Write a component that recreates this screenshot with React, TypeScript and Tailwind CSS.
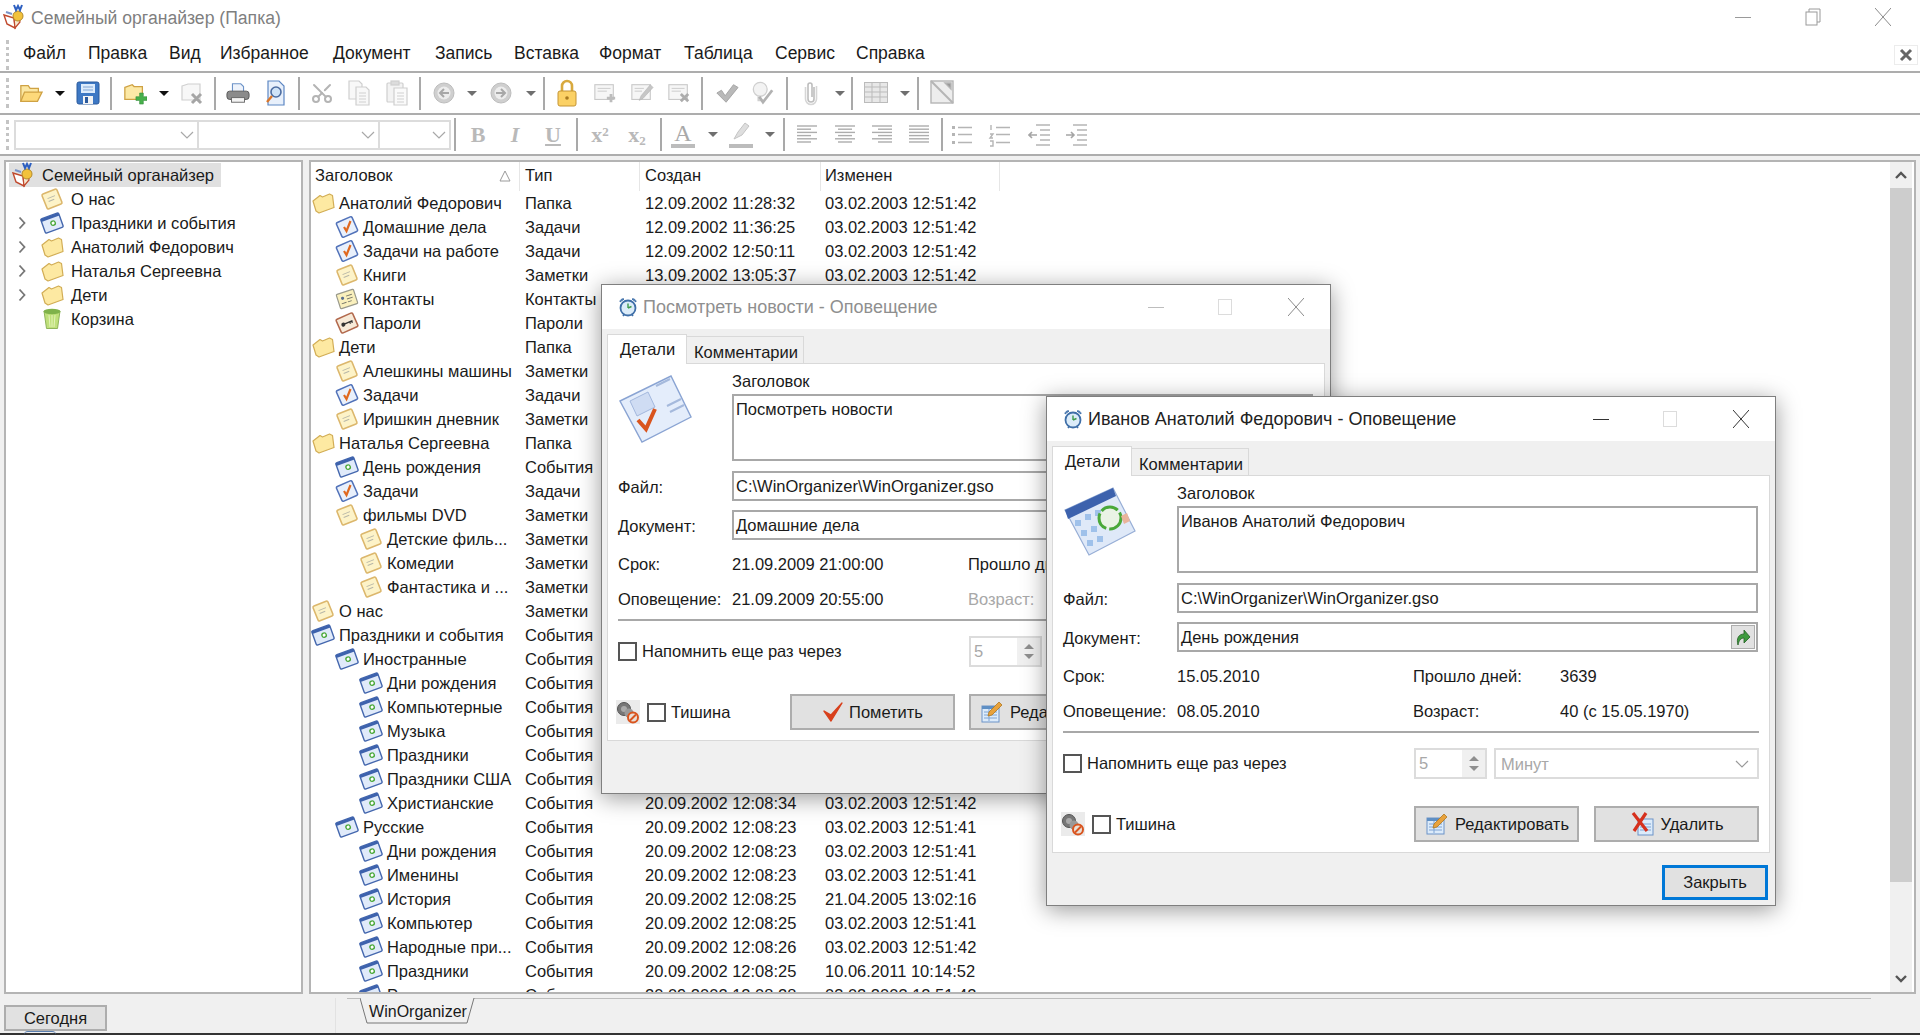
import type { ReactNode } from "react";
import { Scissors } from "lucide-react";

// tree + list icons ---------------------------------------------------------

function NoteIcon() {
  return (
    <svg width="24" height="24" viewBox="0 0 24 24" className="shrink-0">
      <g transform="rotate(-22 12 12)">
        <rect x="4" y="4" width="16" height="16" rx="1.5" fill="#fdf3c8" stroke="#dcb76c" strokeWidth="1.6" />
        <path d="M8 10h8M8 13h6" stroke="#b7b7a8" strokeWidth="1" />
      </g>
    </svg>
  );
}

function EventIcon() {
  return (
    <svg width="24" height="24" viewBox="0 0 24 24" className="shrink-0">
      <g transform="rotate(-20 12 12)">
        <rect x="2.5" y="4.5" width="19" height="15" rx="1.5" fill="#e0eafa" stroke="#4467ae" strokeWidth="1.4" />
        <rect x="2.5" y="4.5" width="19" height="3" fill="#3d62ad" />
        <circle cx="13" cy="12.5" r="2.2" fill="#fff" stroke="#4aa83a" strokeWidth="1.4" />
      </g>
    </svg>
  );
}

function TaskIcon() {
  return (
    <svg width="24" height="24" viewBox="0 0 24 24" className="shrink-0">
      <g transform="rotate(-24 12 12)">
        <rect x="3.5" y="4" width="17" height="16" rx="1.5" fill="#e9f0fb" stroke="#5172b9" strokeWidth="1.5" />
      </g>
      <path d="M9 12l2.5 4L15.5 6" fill="none" stroke="#e0691f" strokeWidth="2.2" />
    </svg>
  );
}

function FolderIcon() {
  return (
    <svg width="24" height="24" viewBox="0 0 24 24" className="shrink-0">
      <path d="M2 10l7-5.5 2.5 1.5 7-3 3 1.5 1.5 12-15 5.5-3-2z" fill="#fde9a2" stroke="#d2ad55" strokeWidth="1.2" strokeLinejoin="round" />
    </svg>
  );
}

function ContactsIcon() {
  return (
    <svg width="24" height="24" viewBox="0 0 24 24" className="shrink-0">
      <g transform="rotate(-18 12 12)">
        <rect x="3" y="4.5" width="18" height="15" rx="1" fill="#faf0bd" stroke="#9a9a8c" strokeWidth="1.2" />
        <circle cx="8" cy="10" r="1.6" fill="#5a6f8f" />
        <path d="M5.5 15h5M12 9h6M12 12h6M12 15h4" stroke="#77776a" strokeWidth="1" />
      </g>
    </svg>
  );
}

function PasswordIcon() {
  return (
    <svg width="24" height="24" viewBox="0 0 24 24" className="shrink-0">
      <g transform="rotate(-24 12 12)">
        <rect x="3" y="4.5" width="18" height="15" rx="1.5" fill="#f7ead8" stroke="#b2694d" strokeWidth="1.5" />
        <circle cx="8" cy="12" r="2" fill="#333" />
        <path d="M9 12h9M15 12v2M17 12v2" stroke="#333" strokeWidth="1.4" />
      </g>
    </svg>
  );
}

function TrashIcon() {
  return (
    <svg width="24" height="24" viewBox="0 0 24 24" className="shrink-0">
      <path d="M4 4h16l-2.5 17.5h-11z" fill="#bfe07a" stroke="#8fb45a" strokeWidth="1" />
      <ellipse cx="12" cy="4.5" rx="8.5" ry="2.8" fill="#7fb24a" />
      <path d="M9 8l1 12M12 8v12M15 8l-1 12" stroke="#e4f3b8" strokeWidth="1" />
    </svg>
  );
}

function AppIcon() {
  return (
    <svg width="26" height="26" viewBox="0 0 26 26" className="shrink-0">
      <path d="M1 11l10 3 1 10-8-4z" fill="#fff" stroke="#c0492d" strokeWidth="1.4" />
      <path d="M11 14l5-3 1 7-5 6z" fill="#f6e8d0" stroke="#c0492d" strokeWidth="1.2" />
      <circle cx="15" cy="12" r="5" fill="#f2c23c" stroke="#b48a2a" strokeWidth="1" />
      <path d="M11 1l2 5 2-4 2 4 2-5" fill="none" stroke="#2d5fc0" strokeWidth="2" />
      <path d="M3 8l6 2" stroke="#7a93c8" strokeWidth="2" />
    </svg>
  );
}

function AlarmIcon() {
  return (
    <svg width="22" height="22" viewBox="0 0 22 22" className="shrink-0">
      <circle cx="11" cy="12" r="7.5" fill="#dcecf9" stroke="#3f6fa8" strokeWidth="1.8" />
      <path d="M3 6a3 3 0 0 1 4-3zM19 6a3 3 0 0 0-4-3z" fill="#5f8fc4" stroke="#3f6fa8" />
      <path d="M11 12V7.5M11 12l3.5-1.5" stroke="#3d9a4b" strokeWidth="1.4" />
      <path d="M6 20l1.5-2M16 20l-1.5-2" stroke="#3f6fa8" strokeWidth="1.6" />
    </svg>
  );
}

function BigTaskIcon() {
  return (
    <svg width="74" height="70" viewBox="0 0 74 70">
      <path d="M2 27L53 2l20 41-49 25z" fill="#e4edfb" stroke="#8aa4d3" strokeWidth="1.4" />
      <path d="M12 27l18-9 7 15-18 9z" fill="#cfdcf3" stroke="#a3b8de" />
      <path d="M38 12l14-7M49 32l14-7M52 38l14-7" stroke="#a5b9dc" strokeWidth="2" />
      <path d="M20 46l8 9 9-20" fill="none" stroke="#d9541e" strokeWidth="4" />
    </svg>
  );
}

function BigCalendarIcon() {
  return (
    <svg width="74" height="72" viewBox="0 0 74 72">
      <path d="M2 24L50 2l22 43-46 24z" fill="#dfe9f8" stroke="#97aed6" strokeWidth="1.2" />
      <path d="M2 24L50 2l3 8L5 33z" fill="#3d62ad" />
      <g fill="#9fc1ea">
        <rect x="12" y="34" width="6" height="6" />
        <rect x="22" y="28" width="6" height="6" />
        <rect x="32" y="24" width="6" height="6" />
        <rect x="18" y="44" width="6" height="6" />
        <rect x="28" y="40" width="6" height="6" />
        <rect x="24" y="54" width="6" height="6" />
        <rect x="34" y="50" width="6" height="6" />
      </g>
      <circle cx="47" cy="32" r="11" fill="#eaf3e6" stroke="#4aa83a" strokeWidth="3" strokeDasharray="18 3" />
      <path d="M58 30l6-3 3 8-6 3z" fill="#e9b49b" />
    </svg>
  );
}

function SilentIcon() {
  return (
    <svg width="24" height="24" viewBox="0 0 24 24" className="shrink-0 bg-[#ebebeb]">
      <circle cx="8" cy="9" r="6.5" fill="#777" stroke="#555" />
      <circle cx="8" cy="9" r="3" fill="#aaa" />
      <circle cx="13" cy="13" r="4.5" fill="#999" />
      <circle cx="17" cy="17.5" r="5" fill="#e8e0d8" stroke="#d9541e" strokeWidth="2" />
      <path d="M14 20.5l6-6" stroke="#d9541e" strokeWidth="2" />
    </svg>
  );
}

function EditIcon() {
  return (
    <svg width="26" height="26" viewBox="0 0 26 26" className="shrink-0">
      <rect x="3" y="7" width="17" height="16" fill="#dcebfa" stroke="#6d93c8" />
      <rect x="3" y="7" width="17" height="3" fill="#5f8fc4" />
      <path d="M5 13h13M5 16h13M5 19h13M10 10v12" stroke="#7fa4d4" />
      <path d="M10 13l10-10 3 3-10 10-4 1z" fill="#e8a23c" stroke="#b07920" strokeWidth="0.8" />
    </svg>
  );
}

function DeleteIcon() {
  return (
    <svg width="26" height="26" viewBox="0 0 26 26" className="shrink-0">
      <rect x="8" y="8" width="15" height="16" fill="#dcebfa" stroke="#6d93c8" />
      <path d="M10 13h11M10 16h11M10 19h11" stroke="#7fa4d4" />
      <path d="M3 2l14 18M16 2L4 20" stroke="#d6301c" strokeWidth="3.2" />
    </svg>
  );
}

function RedCheck() {
  return (
    <svg width="22" height="24" viewBox="0 0 22 24" className="shrink-0">
      <path d="M2 11l7 10L20 3 9 15z" fill="#d8401c" stroke="#d8401c" strokeWidth="1.4" strokeLinejoin="round" />
    </svg>
  );
}

function GoIcon() {
  return (
    <svg width="16" height="20" viewBox="0 0 16 20">
      <path d="M3 18c-2-7 1-11 6-11V3l6 7-6 6v-5c-3 0-5 2-6 7z" fill="#3e9b3e" stroke="#245f24" strokeWidth="0.8" />
    </svg>
  );
}

// window chrome -------------------------------------------------------------

function WinMin({ color }: { color: string }) {
  return (
    <svg width="16" height="16" viewBox="0 0 16 16" stroke={color}>
      <path d="M0 8.5h16" />
    </svg>
  );
}

function WinMax({ color }: { color: string }) {
  return (
    <svg width="16" height="16" viewBox="0 0 16 16" fill="none" stroke={color}>
      <rect x="1.5" y="0.5" width="13" height="15" />
    </svg>
  );
}

function WinRestore({ color }: { color: string }) {
  return (
    <svg width="16" height="18" viewBox="0 0 16 18" fill="none" stroke={color}>
      <path d="M4 4V1h11v13h-3" />
      <rect x="1" y="4" width="11" height="13" />
    </svg>
  );
}

function WinClose({ color }: { color: string }) {
  return (
    <svg width="16" height="18" viewBox="0 0 16 18" fill="none" stroke={color}>
      <path d="M0 0l16 18M16 0L0 18" />
    </svg>
  );
}

function ChevronDown({ color = "#a8a8a8" }: { color?: string }) {
  return (
    <svg width="14" height="8" viewBox="0 0 14 8" fill="none" stroke={color} strokeWidth="1.2" className="shrink-0">
      <path d="M1 1l6 6 6-6" />
    </svg>
  );
}

// toolbar -------------------------------------------------------------------

function Tool({ ml, children }: { ml: string; children: ReactNode }) {
  return <div className={`${ml} flex h-6 w-6 shrink-0 items-center justify-center`}>{children}</div>;
}

function Arrow({ ml, dim }: { ml: string; dim?: boolean }) {
  return (
    <div className={`${ml} h-0 w-0 shrink-0 border-x-[5px] border-t-[5px] border-x-transparent ${dim ? "border-t-[#6f6f6f]" : "border-t-[#111]"} mr-[10px]`} />
  );
}

function Sep({ ml }: { ml: string }) {
  return <div className={`${ml} h-[33px] w-[2px] shrink-0 bg-[#a9a9a9]`} />;
}

function Gripper() {
  return <div className="h-[30px] w-[3px] shrink-0 border-l-[3px] border-dotted border-[#c4c4c4]" />;
}

function LinesIcon({ rows }: { rows: [number, number][] }) {
  return (
    <svg width="24" height="24" viewBox="0 0 24 24" stroke="#adadad" strokeWidth="1.4">
      {rows.map(([a, b], i) => (
        <path key={i} d={`M${a} ${3 + i * 3.2}H${b}`} />
      ))}
    </svg>
  );
}

function MainToolbar() {
  return (
    <div className="flex h-[42px] shrink-0 items-center border-b-2 border-[#adadad] pl-[6px]">
      <Gripper />
      <Tool ml="ml-[10px]">
        <svg width="26" height="24" viewBox="0 0 26 24">
          <path d="M2 21V4h8l2 3h9v4" fill="#fbe7a3" stroke="#cfa244" strokeWidth="1.4" />
          <path d="M2 21l4-10h19l-5 10z" fill="#fdd97a" stroke="#cfa244" strokeWidth="1.4" />
        </svg>
      </Tool>
      <Arrow ml="ml-[12px]" />
      <Tool ml="ml-px">
        <svg width="24" height="24" viewBox="0 0 24 24">
          <rect x="1" y="1" width="22" height="22" rx="2" fill="#3d78c4" stroke="#2b5a9c" />
          <rect x="5" y="3" width="14" height="9" fill="#dcebfb" />
          <path d="M7 6h10M7 9h10" stroke="#7fa4d4" />
          <rect x="7" y="15" width="10" height="8" fill="#f4f4f4" />
          <rect x="9" y="16" width="3" height="6" fill="#2b5a9c" />
        </svg>
      </Tool>
      <Sep ml="ml-[10px]" />
      <Tool ml="ml-[11px]">
        <svg width="26" height="24" viewBox="0 0 26 24">
          <path d="M2 6l8-3 2 2h9v14H2z" fill="#fce9a6" stroke="#cfa244" strokeWidth="1.4" />
          <path d="M14 16h4v-4h4v4h4v4h-4v4h-4v-4h-4z" fill="#47b04b" stroke="#2f8a36" strokeWidth="0.6" />
        </svg>
      </Tool>
      <Arrow ml="ml-[12px]" />
      <Tool ml="ml-px">
        <svg width="24" height="24" viewBox="0 0 24 24">
          <path d="M2 5l6-2h12v16H2z" fill="#f7f7f7" stroke="#d0d0d0" strokeWidth="1.2" />
          <path d="M12 13l9 9M21 13l-9 9" stroke="#a5a5a5" strokeWidth="3" />
        </svg>
      </Tool>
      <Sep ml="ml-[10px]" />
      <Tool ml="ml-[10px]">
        <svg width="26" height="24" viewBox="0 0 26 24">
          <path d="M7 10V2h9l3 3v5" fill="#eef3fb" stroke="#6d93c8" strokeWidth="1.2" />
          <rect x="1" y="10" width="24" height="9" rx="3" fill="#8b8b8b" stroke="#555" />
          <rect x="6" y="17" width="14" height="5" fill="#f4f4f4" stroke="#666" />
        </svg>
      </Tool>
      <Tool ml="ml-[14px]">
        <svg width="24" height="26" viewBox="0 0 24 26">
          <path d="M4 1h11l5 5v19H4z" fill="#e8f0fb" stroke="#5d87c4" strokeWidth="1.2" />
          <circle cx="12" cy="12" r="5" fill="#cfe3f7" stroke="#4c6ca0" strokeWidth="1.6" />
          <path d="M8 16l-5 6" stroke="#d9762a" strokeWidth="2.4" />
        </svg>
      </Tool>
      <Sep ml="ml-[10px]" />
      <Tool ml="ml-[10px]">
        <Scissors size={26} color="#b4b4b4" strokeWidth={2} className="-rotate-90" />
      </Tool>
      <Tool ml="ml-[13px]">
        <svg width="24" height="26" viewBox="0 0 24 26" fill="#f8f8f8" stroke="#cfcfcf" strokeWidth="1.2">
          <path d="M2 1h10l3 3v15H2z" />
          <path d="M9 7h10l3 3v15H9z" />
          <path d="M12 13h7M12 16h7M12 19h7M12 22h7" />
        </svg>
      </Tool>
      <Tool ml="ml-[14px]">
        <svg width="24" height="26" viewBox="0 0 24 26" fill="#f3f3f3" stroke="#cfcfcf" strokeWidth="1.2">
          <rect x="2" y="3" width="16" height="19" rx="1" />
          <rect x="6" y="1" width="8" height="4" fill="#dcdcdc" />
          <path d="M9 8h13v17H9z" fill="#fafafa" />
          <path d="M12 13h7M12 16h7M12 19h7M12 22h7" />
        </svg>
      </Tool>
      <Sep ml="ml-[10px]" />
      <Tool ml="ml-[11px]">
        <svg width="24" height="24" viewBox="0 0 24 24">
          <circle cx="12" cy="12" r="10" fill="#cfcfcf" stroke="#bdbdbd" />
          <circle cx="12" cy="12" r="6.5" fill="#ededed" />
          <path d="M17 12H9M12 8l-4 4 4 4" fill="none" stroke="#a8a8a8" strokeWidth="2" />
        </svg>
      </Tool>
      <Arrow ml="ml-[11px]" dim />
      <Tool ml="ml-[2px]">
        <svg width="24" height="24" viewBox="0 0 24 24">
          <circle cx="12" cy="12" r="10" fill="#cfcfcf" stroke="#bdbdbd" />
          <circle cx="12" cy="12" r="6.5" fill="#ededed" />
          <path d="M7 12h8M12 8l4 4-4 4" fill="none" stroke="#a8a8a8" strokeWidth="2" />
        </svg>
      </Tool>
      <Arrow ml="ml-[13px]" dim />
      <Sep ml="-ml-[3px]" />
      <Tool ml="ml-[10px]">
        <svg width="20" height="28" viewBox="0 0 20 28">
          <path d="M5 13V7a5 5 0 0 1 10 0v6" fill="none" stroke="#d8a93e" strokeWidth="2.6" />
          <rect x="1" y="12" width="18" height="15" rx="2" fill="#fbd165" stroke="#c59535" />
          <circle cx="10" cy="19" r="1.8" fill="#a87a20" />
        </svg>
      </Tool>
      <Tool ml="ml-[14px]">
        <svg width="26" height="24" viewBox="0 0 26 24">
          <rect x="2" y="3" width="20" height="16" fill="#f6f6f6" stroke="#c9c9c9" strokeWidth="1.2" />
          <path d="M5 7h14M5 10h10" stroke="#c9c9c9" />
          <path d="M15 16h3v-3h3v3h3v3h-3v3h-3v-3h-3z" fill="#bcbcbc" />
        </svg>
      </Tool>
      <Tool ml="ml-[13px]">
        <svg width="26" height="24" viewBox="0 0 26 24">
          <rect x="2" y="3" width="20" height="16" fill="#f6f6f6" stroke="#c9c9c9" strokeWidth="1.2" />
          <path d="M5 7h10M5 10h8" stroke="#c9c9c9" />
          <path d="M10 20l2-5L22 3l3 3-11 12z" fill="#c6c6c6" stroke="#b0b0b0" strokeWidth="0.6" />
        </svg>
      </Tool>
      <Tool ml="ml-[13px]">
        <svg width="26" height="24" viewBox="0 0 26 24">
          <rect x="2" y="3" width="20" height="16" fill="#f6f6f6" stroke="#c9c9c9" strokeWidth="1.2" />
          <path d="M5 7h14M5 10h10" stroke="#c9c9c9" />
          <path d="M15 13l8 8M23 13l-8 8" stroke="#adadad" strokeWidth="3" />
        </svg>
      </Tool>
      <Sep ml="ml-[10px]" />
      <Tool ml="ml-[12px]">
        <svg width="26" height="22" viewBox="0 0 26 22">
          <path d="M2 11l5-3 4 6L20 2l5 3-13 16z" fill="#b9b9b9" stroke="#a3a3a3" />
        </svg>
      </Tool>
      <Tool ml="ml-[12px]">
        <svg width="26" height="26" viewBox="0 0 26 26">
          <circle cx="10" cy="9" r="7.5" fill="#f3f3f3" stroke="#cfcfcf" strokeWidth="1.4" />
          <path d="M8 17v4h5" stroke="#cfcfcf" strokeWidth="2" fill="none" />
          <path d="M9 17l4 6 10-13" fill="none" stroke="#b2b2b2" strokeWidth="3" />
        </svg>
      </Tool>
      <Sep ml="ml-[11px]" />
      <Tool ml="ml-[11px]">
        <svg width="14" height="26" viewBox="0 0 14 26" fill="none" stroke="#bdbdbd" strokeWidth="1.6">
          <path d="M10 7v12a3 3 0 0 1-6 0V5a2 2 0 0 1 4 0v12" />
          <path d="M12.5 6v13a5.5 5.5 0 0 1-11 0V7" stroke="#d6d6d6" />
        </svg>
      </Tool>
      <Arrow ml="ml-[12px]" dim />
      <Sep ml="-ml-[4px]" />
      <Tool ml="ml-[11px]">
        <svg width="24" height="22" viewBox="0 0 24 22" fill="#e8e8e8" stroke="#bbb">
          <rect x="0.5" y="0.5" width="23" height="20" />
          <path d="M0 5h24M0 10h24M0 15h24M8 0v21M16 0v21" />
        </svg>
      </Tool>
      <Arrow ml="ml-[12px]" dim />
      <Sep ml="-ml-[3px]" />
      <Tool ml="ml-[11px]">
        <svg width="24" height="26" viewBox="0 0 24 26" fill="none" stroke="#b5b5b5" strokeWidth="1.4">
          <rect x="1" y="1" width="22" height="22" fill="#ededed" />
          <path d="M1 1l22 22" strokeWidth="2" />
          <path d="M15 3h6v6z" fill="#999" />
        </svg>
      </Tool>
    </div>
  );
}

function FormatToolbar() {
  const letter = "font-['Liberation_Serif',serif] text-[22px] font-bold text-[#b9b9b9]";
  return (
    <div className="flex h-[41px] shrink-0 items-center border-b-2 border-[#adadad] pl-[6px]">
      <Gripper />
      <div className="ml-[5px] flex h-[30px] w-[185px] shrink-0 items-center justify-end border-2 border-[#dcdcdc] pr-[3px]">
        <ChevronDown />
      </div>
      <div className="flex h-[30px] w-[181px] shrink-0 items-center justify-end border-y-2 border-r-2 border-[#dcdcdc] pr-[3px]">
        <ChevronDown />
      </div>
      <div className="flex h-[30px] w-[71px] shrink-0 items-center justify-end border-y-2 border-r-2 border-[#dcdcdc] pr-[3px]">
        <ChevronDown />
      </div>
      <Sep ml="ml-[3px]" />
      <Tool ml="ml-[10px]"><span className={letter}>B</span></Tool>
      <Tool ml="ml-[13px]"><span className={`${letter} italic`}>I</span></Tool>
      <Tool ml="ml-[14px]"><span className={`${letter} underline`}>U</span></Tool>
      <Sep ml="ml-[11px]" />
      <Tool ml="ml-[10px]"><span className={letter}>x<sup className="text-[13px]">2</sup></span></Tool>
      <Tool ml="ml-[13px]"><span className={`${letter} text-[18px]`}>x<sub className="text-[13px]">2</sub></span></Tool>
      <Sep ml="ml-[11px]" />
      <Tool ml="ml-[9px]">
        <div className="flex flex-col items-center">
          <span className="font-['Liberation_Serif',serif] text-[24px] leading-[22px] text-[#a9a9a9]">A</span>
          <div className="h-1 w-6 bg-[#bcbcbc]" />
        </div>
      </Tool>
      <Arrow ml="ml-[13px]" dim />
      <Tool ml="ml-px">
        <svg width="24" height="28" viewBox="0 0 24 28">
          <path d="M5 18l4-7 7-9 4 3-7 9z" fill="#dedede" stroke="#c4c4c4" />
          <rect x="0" y="23" width="24" height="4" fill="#bcbcbc" />
        </svg>
      </Tool>
      <Arrow ml="ml-[12px]" dim />
      <Sep ml="-ml-[2px]" />
      <Tool ml="ml-[10px]"><LinesIcon rows={[[2, 22], [2, 16], [2, 22], [2, 16], [2, 22], [2, 16]]} /></Tool>
      <Tool ml="ml-[14px]"><LinesIcon rows={[[2, 22], [5, 19], [2, 22], [5, 19], [2, 22], [5, 19]]} /></Tool>
      <Tool ml="ml-[13px]"><LinesIcon rows={[[2, 22], [8, 22], [2, 22], [8, 22], [2, 22], [8, 22]]} /></Tool>
      <Tool ml="ml-[13px]"><LinesIcon rows={[[2, 22], [2, 22], [2, 22], [2, 22], [2, 22], [2, 22]]} /></Tool>
      <Sep ml="ml-[10px]" />
      <Tool ml="ml-[7px]">
        <svg width="24" height="24" viewBox="0 0 24 24" stroke="#b5b5b5" strokeWidth="1.4" fill="#b5b5b5">
          <rect x="2" y="3" width="3" height="3" stroke="none" />
          <rect x="2" y="10" width="3" height="3" stroke="none" />
          <rect x="2" y="18" width="3" height="3" stroke="none" />
          <path d="M8 4.5h14M8 11.5h14M8 19.5h14" />
        </svg>
      </Tool>
      <Tool ml="ml-[14px]">
        <svg width="24" height="24" viewBox="0 0 24 24" stroke="#b5b5b5" strokeWidth="1.4">
          <path d="M3 2v5M2 11h3l-3 4h3M2 18h3v5H2M8 4.5h14M8 11.5h14M8 19.5h14" fill="none" />
        </svg>
      </Tool>
      <Tool ml="ml-[16px]">
        <svg width="24" height="24" viewBox="0 0 24 24" stroke="#b5b5b5" strokeWidth="1.6" fill="none">
          <path d="M8 2h14M12 7h10M12 12h10M12 17h10M8 22h14" />
          <path d="M1 12h8M4 9l-3 3 3 3" stroke="#a5a5a5" />
        </svg>
      </Tool>
      <Tool ml="ml-[13px]">
        <svg width="24" height="24" viewBox="0 0 24 24" stroke="#b5b5b5" strokeWidth="1.6" fill="none">
          <path d="M8 2h14M12 7h10M12 12h10M12 17h10M8 22h14" />
          <path d="M1 12h8M6 9l3 3-3 3" stroke="#a5a5a5" />
        </svg>
      </Tool>
    </div>
  );
}

// left tree -----------------------------------------------------------------

const treeNodes: { label: string; icon: ReactNode; arrow?: boolean }[] = [
  { label: "О нас", icon: <NoteIcon /> },
  { label: "Праздники и события", icon: <EventIcon />, arrow: true },
  { label: "Анатолий Федорович", icon: <FolderIcon />, arrow: true },
  { label: "Наталья Сергеевна", icon: <FolderIcon />, arrow: true },
  { label: "Дети", icon: <FolderIcon />, arrow: true },
  { label: "Корзина", icon: <TrashIcon /> },
];

function TreePanel() {
  return (
    <div className="ml-[4px] w-[299px] shrink-0 border-2 border-[#b4b4b4] bg-white pt-[1px] pl-[3px] text-[16.5px] text-[#1a1a1a]">
      <div className="flex h-6 w-[212px] items-center gap-[4px] bg-[#e0e0e0] pl-[3px]">
        <AppIcon />
        <span>Семейный органайзер</span>
      </div>
      {treeNodes.map((node) => (
        <div key={node.label} className="flex h-6 items-center">
          <div className="flex w-[31px] justify-center pr-[5px]">
            {node.arrow && (
              <svg width="9" height="14" viewBox="0 0 9 14" fill="none" stroke="#777" strokeWidth="1.8">
                <path d="M1.5 1.5l5 5.5-5 5.5" />
              </svg>
            )}
          </div>
          {node.icon}
          <span className="ml-[7px]">{node.label}</span>
        </div>
      ))}
    </div>
  );
}

// list ----------------------------------------------------------------------

type Kind = "note" | "event" | "task" | "folder" | "contacts" | "password";

type Row = {
  level: 0 | 1 | 2;
  kind: Kind;
  title: string;
  type: string;
  created?: string;
  changed?: string;
};

const icons: Record<Kind, ReactNode> = {
  note: <NoteIcon />,
  event: <EventIcon />,
  task: <TaskIcon />,
  folder: <FolderIcon />,
  contacts: <ContactsIcon />,
  password: <PasswordIcon />,
};

const indent = ["pl-0", "pl-[24px]", "pl-[48px]"];

const rows: Row[] = [
  { level: 0, kind: "folder", title: "Анатолий Федорович", type: "Папка", created: "12.09.2002 11:28:32", changed: "03.02.2003 12:51:42" },
  { level: 1, kind: "task", title: "Домашние дела", type: "Задачи", created: "12.09.2002 11:36:25", changed: "03.02.2003 12:51:42" },
  { level: 1, kind: "task", title: "Задачи на работе", type: "Задачи", created: "12.09.2002 12:50:11", changed: "03.02.2003 12:51:42" },
  { level: 1, kind: "note", title: "Книги", type: "Заметки", created: "13.09.2002 13:05:37", changed: "03.02.2003 12:51:42" },
  { level: 1, kind: "contacts", title: "Контакты", type: "Контакты" },
  { level: 1, kind: "password", title: "Пароли", type: "Пароли" },
  { level: 0, kind: "folder", title: "Дети", type: "Папка" },
  { level: 1, kind: "note", title: "Алешкины машины", type: "Заметки" },
  { level: 1, kind: "task", title: "Задачи", type: "Задачи" },
  { level: 1, kind: "note", title: "Иришкин дневник", type: "Заметки" },
  { level: 0, kind: "folder", title: "Наталья Сергеевна", type: "Папка" },
  { level: 1, kind: "event", title: "День рождения", type: "События" },
  { level: 1, kind: "task", title: "Задачи", type: "Задачи" },
  { level: 1, kind: "note", title: "фильмы DVD", type: "Заметки" },
  { level: 2, kind: "note", title: "Детские филь...", type: "Заметки" },
  { level: 2, kind: "note", title: "Комедии", type: "Заметки" },
  { level: 2, kind: "note", title: "Фантастика и ...", type: "Заметки" },
  { level: 0, kind: "note", title: "О нас", type: "Заметки" },
  { level: 0, kind: "event", title: "Праздники и события", type: "События" },
  { level: 1, kind: "event", title: "Иностранные", type: "События" },
  { level: 2, kind: "event", title: "Дни рождения", type: "События" },
  { level: 2, kind: "event", title: "Компьютерные", type: "События" },
  { level: 2, kind: "event", title: "Музыка", type: "События" },
  { level: 2, kind: "event", title: "Праздники", type: "События" },
  { level: 2, kind: "event", title: "Праздники США", type: "События" },
  { level: 2, kind: "event", title: "Христианские", type: "События", created: "20.09.2002 12:08:34", changed: "03.02.2003 12:51:42" },
  { level: 1, kind: "event", title: "Русские", type: "События", created: "20.09.2002 12:08:23", changed: "03.02.2003 12:51:41" },
  { level: 2, kind: "event", title: "Дни рождения", type: "События", created: "20.09.2002 12:08:23", changed: "03.02.2003 12:51:41" },
  { level: 2, kind: "event", title: "Именины", type: "События", created: "20.09.2002 12:08:23", changed: "03.02.2003 12:51:41" },
  { level: 2, kind: "event", title: "История", type: "События", created: "20.09.2002 12:08:25", changed: "21.04.2005 13:02:16" },
  { level: 2, kind: "event", title: "Компьютер", type: "События", created: "20.09.2002 12:08:25", changed: "03.02.2003 12:51:41" },
  { level: 2, kind: "event", title: "Народные при...", type: "События", created: "20.09.2002 12:08:26", changed: "03.02.2003 12:51:42" },
  { level: 2, kind: "event", title: "Праздники", type: "События", created: "20.09.2002 12:08:25", changed: "10.06.2011 10:14:52" },
  { level: 2, kind: "event", title: "Религиозные", type: "События", created: "20.09.2002 12:08:28", changed: "03.02.2003 12:51:42" },
];

const listCols = "grid grid-cols-[209px_120px_181px_179px]";

function ListPanel() {
  return (
    <div className="ml-[6px] flex min-w-0 flex-1 border-2 border-[#b4b4b4] bg-white pr-[2px]">
      <div className="min-w-0 flex-1 overflow-hidden text-[16.5px] text-[#1a1a1a]">
        <div className={`${listCols} h-[29px] items-center`}>
          <div className="flex h-full items-center justify-between border-r border-[#e6e6e6] pr-[8px] pb-[2px] pl-[4px]">
            Заголовок
            <svg width="12" height="12" viewBox="0 0 12 12" fill="none" stroke="#9a9a9a">
              <path d="M6 1l5 10H1z" />
            </svg>
          </div>
          <div className="flex h-full items-center border-r border-[#e6e6e6] pb-[2px] pl-[5px]">Тип</div>
          <div className="flex h-full items-center border-r border-[#e6e6e6] pb-[2px] pl-[5px]">Создан</div>
          <div className="flex h-full items-center border-r border-[#e6e6e6] pb-[2px] pl-[4px]">Изменен</div>
        </div>
        {rows.map((r, i) => (
          <div key={i} className={`${listCols} h-6 items-center`}>
            <div className={`flex items-center whitespace-nowrap ${indent[r.level]}`}>
              {icons[r.kind]}
              <span className="ml-[4px]">{r.title}</span>
            </div>
            <div className="pl-[5px]">{r.type}</div>
            <div className="pl-[5px]">{r.created}</div>
            <div className="pl-[4px]">{r.changed}</div>
          </div>
        ))}
      </div>
      <div className="flex w-[22px] shrink-0 flex-col bg-[#f0f0f0]">
        <div className="flex h-[26px] shrink-0 items-center justify-center">
          <svg width="12" height="8" viewBox="0 0 12 8" fill="none" stroke="#555" strokeWidth="2.4">
            <path d="M1 7l5-5 5 5" />
          </svg>
        </div>
        <div className="h-[694px] shrink-0 bg-[#cdcdcd]" />
        <div className="flex flex-1 items-end justify-center pb-[9px]">
          <svg width="12" height="8" viewBox="0 0 12 8" fill="none" stroke="#555" strokeWidth="2.4">
            <path d="M1 1l5 5 5-5" />
          </svg>
        </div>
      </div>
    </div>
  );
}

// alarm dialog --------------------------------------------------------------

function Check() {
  return <div className="h-[19px] w-[19px] shrink-0 border-2 border-[#555] bg-white" />;
}

function Input({ children, right }: { children: ReactNode; right?: ReactNode }) {
  return (
    <div className="flex h-[30px] w-[581px] shrink-0 items-center border-2 border-[#a8a8a8] bg-white pr-[1px] pl-[2px]">
      <span className="flex-1 pt-[1px]">{children}</span>
      {right}
    </div>
  );
}

function Btn({ icon, label, className = "" }: { icon: ReactNode; label: string; className?: string }) {
  return (
    <div className={`flex h-9 w-[165px] shrink-0 items-center justify-center gap-[5px] border-2 border-[#adadad] bg-[#e1e1e1] ${className}`}>
      {icon}
      {label}
    </div>
  );
}

type AlarmProps = {
  position: string;
  active: boolean;
  title: string;
  icon: ReactNode;
  file: string;
  doc: string;
  due: string;
  notify: string;
  days: string;
  ageLabelDim: boolean;
  age: string;
  mark: boolean;
};

function AlarmDialog(p: AlarmProps) {
  const ctl = p.active ? "#333" : "#bdbdbd";
  return (
    <div className={`${p.position} absolute flex h-[510px] w-[730px] flex-col border border-[#7f7f7f] bg-[#f0f0f0] text-[16.5px] text-[#1a1a1a] shadow-[0_4px_22px_rgba(0,0,0,0.4)]`}>
      <div className="flex h-[44px] shrink-0 items-center bg-white pl-[15px]">
        <AlarmIcon />
        <span className={`ml-[4px] pt-[1px] text-[18px] ${p.active ? "text-[#222]" : "text-[#8f8f8f]"}`}>{p.title}</span>
        <div className="ml-auto flex items-center pr-[26px]">
          <WinMin color={ctl} />
          <div className="ml-[53px]"><WinMax color="#dcdcdc" /></div>
          <div className="ml-[55px]"><WinClose color={p.active ? "#333" : "#8a8a8a"} /></div>
        </div>
      </div>

      <div className="flex h-[34px] shrink-0 items-end pl-[5px]">
        <div className="relative top-px z-10 flex h-[30px] w-[80px] items-center border-x border-t border-[#d9d9d9] bg-white pl-[12px]">Детали</div>
        <div className="flex h-[27px] w-[117px] items-center border-t border-r border-[#d9d9d9] pt-[5px] pl-[7px]">Комментарии</div>
      </div>

      <div className="mx-[5px] flex h-[378px] shrink-0 flex-col border border-[#d9d9d9] bg-white px-[10px] pt-[2px]">
        <div className="flex">
          <div className="w-[114px] shrink-0 pt-[8px]">{p.icon}</div>
          <div className="flex flex-col">
            <div className="flex h-[28px] items-center pt-[2px]">Заголовок</div>
            <div className="h-[67px] w-[581px] border-2 border-[#a8a8a8] pt-[1px] pl-[2px]">{p.title.split(" - ")[0]}</div>
          </div>
        </div>
        <div className="mt-[10px] flex items-center">
          <div className="w-[114px] shrink-0 pt-[3px]">Файл:</div>
          <Input>{p.file}</Input>
        </div>
        <div className="mt-[9px] flex items-center">
          <div className="w-[114px] shrink-0 pt-[3px]">Документ:</div>
          <Input
            right={
              <div className="flex h-[24px] w-[24px] items-center justify-center border border-[#adadad] bg-[#e1e1e1]">
                <GoIcon />
              </div>
            }
          >
            {p.doc}
          </Input>
        </div>
        <div className="mt-[11px] grid h-6 grid-cols-[114px_236px_147px_1fr] items-center pt-[1px]">
          <div>Срок:</div>
          <div>{p.due}</div>
          <div>Прошло дней:</div>
          <div>{p.days}</div>
        </div>
        <div className="mt-[12px] grid h-6 grid-cols-[114px_236px_147px_1fr] items-center pb-[1px]">
          <div>Оповещение:</div>
          <div>{p.notify}</div>
          <div className={p.ageLabelDim ? "text-[#a8a8a8]" : ""}>Возраст:</div>
          <div>{p.age}</div>
        </div>
        <div className="mt-[8px] h-[2px] shrink-0 bg-[#a8a8a8]" />
        <div className="mt-[15px] flex h-[31px] items-center">
          <div className="flex w-[351px] shrink-0 items-center gap-[5px]">
            <Check />
            Напомнить еще раз через
          </div>
          <div className="flex h-[31px] w-[73px] shrink-0 items-center border-2 border-[#dcdcdc] pl-[3px] text-[#a8a8a8]">
            <span className="flex-1">5</span>
            <div className="flex h-full w-[23px] flex-col items-center justify-center gap-[5px] bg-[#f0f0f0]">
              <div className="h-0 w-0 border-x-[5px] border-b-[5px] border-x-transparent border-b-[#8f8f8f]" />
              <div className="h-0 w-0 border-x-[5px] border-t-[5px] border-x-transparent border-t-[#8f8f8f]" />
            </div>
          </div>
          <div className="ml-[7px] flex h-[31px] w-[265px] shrink-0 items-center justify-between border-2 border-[#dcdcdc] pt-[1px] pr-[8px] pl-[5px] text-[#a8a8a8]">
            Минут
            <ChevronDown color="#9a9a9a" />
          </div>
        </div>
        <div className="mt-[27px] flex h-9 items-center">
          <div className="-ml-[2px] flex w-[174px] shrink-0 items-center">
            <SilentIcon />
            <div className="ml-[7px]"><Check /></div>
            <span className="ml-[5px] pt-[1px]">Тишина</span>
          </div>
          {p.mark ? (
            <Btn icon={<RedCheck />} label="Пометить" />
          ) : (
            <div className="w-[165px] shrink-0" />
          )}
          <Btn className="ml-[14px]" icon={<EditIcon />} label="Редактировать" />
          <Btn className="ml-[15px]" icon={<DeleteIcon />} label="Удалить" />
        </div>
      </div>

      <div className="flex justify-end pt-[12px] pr-[7px]">
        <div className={`flex h-[35px] w-[106px] items-center justify-center bg-[#e1e1e1] ${p.active ? "border-[3px] border-[#0078d7]" : "border-2 border-[#adadad]"}`}>
          Закрыть
        </div>
      </div>
    </div>
  );
}

// app -----------------------------------------------------------------------

const menu = [
  { label: "Файл", w: "w-[65px]" },
  { label: "Правка", w: "w-[81px]" },
  { label: "Вид", w: "w-[51px]" },
  { label: "Избранное", w: "w-[113px]" },
  { label: "Документ", w: "w-[102px]" },
  { label: "Запись", w: "w-[79px]" },
  { label: "Вставка", w: "w-[85px]" },
  { label: "Формат", w: "w-[85px]" },
  { label: "Таблица", w: "w-[91px]" },
  { label: "Сервис", w: "w-[81px]" },
  { label: "Справка", w: "w-[90px]" },
];

export default function App() {
  return (
    <div className="relative flex h-[1035px] w-[1920px] flex-col overflow-hidden bg-white font-['Liberation_Sans',sans-serif]">
      <div className="flex h-[38px] shrink-0 items-start pl-[3px]">
        <div className="pt-[4px]"><AppIcon /></div>
        <span className="mt-[7px] ml-[2px] text-[17.6px] leading-[22px] text-[#7f7f7f]">Семейный органайзер (Папка)</span>
        <div className="ml-auto flex items-center pt-[8px] pr-[29px]">
          <WinMin color="#9a9a9a" />
          <div className="ml-[54px]"><WinRestore color="#9a9a9a" /></div>
          <div className="ml-[54px]"><WinClose color="#8a8a8a" /></div>
        </div>
      </div>

      <div className="flex h-[35px] shrink-0 items-center border-b-2 border-[#adadad] pl-[6px]">
        <Gripper />
        <div className="ml-[14px] flex pb-[2px] text-[17.5px] text-[#1a1a1a]">
          {menu.map((m) => (
            <div key={m.label} className={m.w}>{m.label}</div>
          ))}
        </div>
        <div className="mr-[2px] ml-auto flex h-[20px] w-[24px] items-center justify-center border border-[#ececec] text-[#666]">
          <svg width="14" height="14" viewBox="0 0 14 14" stroke="#666" strokeWidth="3">
            <path d="M2 2l10 10M12 2L2 12" />
          </svg>
        </div>
      </div>

      <MainToolbar />
      <FormatToolbar />

      <div className="flex h-[840px] shrink-0 bg-[#f0f0f0] pt-[4px] pr-[4px] pb-[2px]">
        <TreePanel />
        <ListPanel />
      </div>

      <div className="relative flex flex-1 border-b-2 border-[#333] bg-[#f0f0f0] pl-[4px]">
        <div className="mt-[9px] flex h-[26px] w-[103px] items-center justify-center border-2 border-[#adadad] bg-[#e1e1e1] text-[16.5px] text-[#1a1a1a]">
          Сегодня
        </div>
        <div className="absolute -bottom-[2px] left-[24px] h-[4px] w-[32px] rounded-t-full border-t border-[#5a7fb0]" />
      </div>

      <div className="absolute top-[998px] left-[347px] h-px w-[1524px] bg-[#bdbdbd]" />
      <div className="absolute top-[998px] left-[335px] h-[35px] w-px bg-[#e2e2e2]" />
      <div className="absolute top-[998px] left-[360px] flex h-[26px] w-[116px] items-center justify-center pt-[1px] text-[16px] text-[#1a1a1a]">
        <svg width="116" height="26" viewBox="0 0 116 26" fill="#f0f0f0" stroke="#777" className="absolute inset-0">
          <path d="M0 0l7 25h100l7-25" />
        </svg>
        <span className="relative">WinOrganizer</span>
      </div>

      <AlarmDialog
        position="top-[284px] left-[601px]"
        active={false}
        title="Посмотреть новости - Оповещение"
        icon={<BigTaskIcon />}
        file="C:\WinOrganizer\WinOrganizer.gso"
        doc="Домашние дела"
        due="21.09.2009 21:00:00"
        notify="21.09.2009 20:55:00"
        days=""
        ageLabelDim
        age=""
        mark
      />
      <AlarmDialog
        position="top-[396px] left-[1046px]"
        active
        title="Иванов Анатолий Федорович - Оповещение"
        icon={<BigCalendarIcon />}
        file="C:\WinOrganizer\WinOrganizer.gso"
        doc="День рождения"
        due="15.05.2010"
        notify="08.05.2010"
        days="3639"
        ageLabelDim={false}
        age="40 (с 15.05.1970)"
        mark={false}
      />
    </div>
  );
}
